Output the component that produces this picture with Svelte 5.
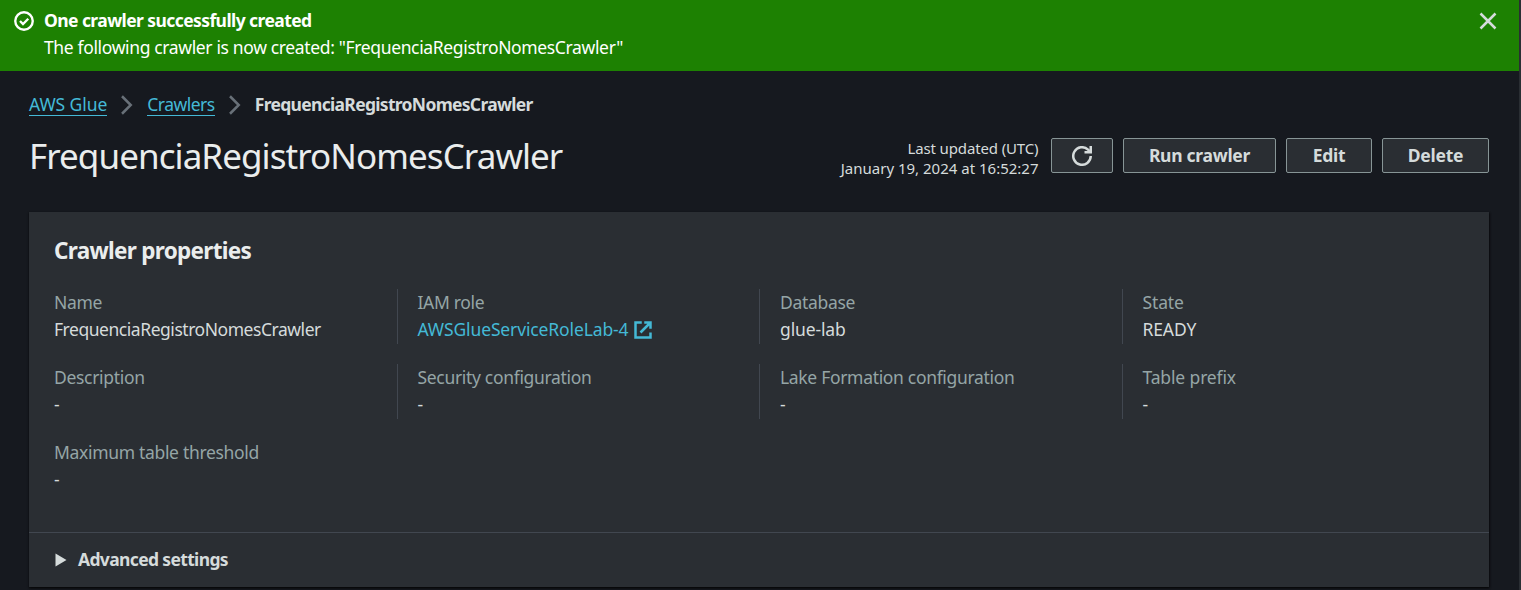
<script>
  const fields = [
    { label: 'Name', value: 'FrequenciaRegistroNomesCrawler' },
    { label: 'IAM role', value: 'AWSGlueServiceRoleLab-4', link: true },
    { label: 'Database', value: 'glue-lab' },
    { label: 'State', value: 'READY' },
    { label: 'Description', value: '-' },
    { label: 'Security configuration', value: '-' },
    { label: 'Lake Formation configuration', value: '-' },
    { label: 'Table prefix', value: '-' },
    { label: 'Maximum table threshold', value: '-' }
  ];
</script>

{#snippet chevron()}
  <svg class="chevron" width="20" height="20" viewBox="0 0 16 16"><path d="M4 1l7 7-7 7" /></svg>
{/snippet}

<div class="page">
  <div class="flash" role="status">
    <svg class="check" width="20" height="20" viewBox="0 0 16 16"><circle cx="8" cy="8" r="7" /><path d="M4.8 8l2.4 2.4 4.2-4.2" /></svg>
    <div class="message">
      <div class="title">One crawler successfully created</div>
      <div class="detail">The following crawler is now created: "FrequenciaRegistroNomesCrawler"</div>
    </div>
    <button class="close" aria-label="Close">
      <svg width="20" height="20" viewBox="0 0 16 16"><path d="M2 2l12 12M14 2L2 14" /></svg>
    </button>
  </div>

  <main>
    <nav>
      <a class="service" href="#glue">AWS Glue</a>
      {@render chevron()}
      <a class="list" href="#crawlers">Crawlers</a>
      {@render chevron()}
      <strong>FrequenciaRegistroNomesCrawler</strong>
    </nav>

    <header>
      <h1>FrequenciaRegistroNomesCrawler</h1>
      <div class="updated"><span class="caption">Last updated (UTC)</span><br /><span>January 19, 2024 at 16:52:27</span></div>
      <div class="actions">
        <button class="refresh" aria-label="Refresh">
          <svg width="20" height="20" viewBox="0 0 16 16"><path d="M15 8a7 7 0 1 1-2.2-5.1L14 4.1" /><path d="M10 5h5V0" /></svg>
        </button>
        <button class="run">Run crawler</button>
        <button class="edit">Edit</button>
        <button class="delete">Delete</button>
      </div>
    </header>

    <section>
      <h2>Crawler properties</h2>
      <dl>
        {#each fields as field}
          <div class="field">
            <dt>{field.label}</dt>
            <dd>
              {#if field.link}
                <a href="#role">{field.value}</a><svg width="20" height="20" viewBox="0 0 16 16"><path d="M7 2H2v12h12V10M9 2h5v5M6 10l8-8" /></svg>
              {:else}
                <span class:long={field.value.length > 20}>{field.value}</span>
              {/if}
            </dd>
          </div>
        {/each}
      </dl>
      <div class="advanced">
        <svg width="12" height="14" viewBox="0 0 12 14"><path d="M.5 .5L11.5 7 .5 13.5z" /></svg>
        <span>Advanced settings</span>
      </div>
    </section>
  </main>
</div>

<style>
  :global(body) { background: #2a2e33; }
  .page {
    box-sizing: border-box;
    width: 1519px;
    height: 590px;
    overflow: hidden;
    background: #16191f;
    color: #d5dbdb;
    font: 17.5px/27px "Noto Sans", "Open Sans", sans-serif;
  }
  svg { fill: none; stroke: currentColor; stroke-width: 2; flex: none; }
  span, strong, h1, dt, a { white-space: nowrap; }
  button { font: inherit; color: inherit; margin: 0; padding: 0; }

  .flash {
    display: flex;
    box-sizing: border-box;
    height: 71px;
    padding: 7px 21px 0 14px;
    background: #1d8102;
    color: #fff;
  }
  .check { margin: 4px 10px 0 0; stroke-width: 1.9; }
  .message { flex: 1; }
  .title { font-weight: 700; letter-spacing: -.58px; }
  .detail { letter-spacing: -.355px; }
  .close { border: 0; background: none; height: 20px; margin-top: 4px; color: #d5dbdb; }
  .close svg { display: block; }

  main { padding: 20px 30px 0 29px; }
  nav { display: flex; align-items: center; height: 27px; }
  nav a { line-height: 21px; border-bottom: 1px solid; color: #44b9d6; text-decoration: none; }
  .service { letter-spacing: -.08px; }
  .list { letter-spacing: -.5px; }
  strong { letter-spacing: -.69px; }
  .chevron { margin: 0 10px; color: #687078; }

  header { display: flex; align-items: flex-start; margin-top: 19px; height: 75px; }
  h1 { flex: 1; margin: 0; font-size: 35px; line-height: 38px; font-weight: 400; letter-spacing: -.93px; color: #eaeded; }
  .updated { margin-top: 1px; font-size: 15px; line-height: 20px; text-align: right; }
  .caption { letter-spacing: -.13px; }
  .actions { display: flex; gap: 10px; margin: 1px 0 0 12.5px; }
  .actions button {
    box-sizing: border-box;
    height: 35px;
    border: 1px solid #879596;
    border-radius: 2px;
    background: #2a2e33;
    font-weight: 700;
    letter-spacing: -.28px;
    line-height: 33px;
    white-space: nowrap;
  }
  .actions .refresh { width: 62px; display: grid; place-items: center; }
  .run { width: 153px; }
  .edit { width: 86px; }
  .delete { width: 107px; }

  section {
    box-sizing: border-box;
    height: 375px;
    background: #2a2e33;
    box-shadow: 0 1px 2px rgba(0, 0, 0, .7), 1px 1px 2px rgba(0, 0, 0, .4);
  }
  h2 { margin: 0; padding: 24px 25px 0; font-size: 22.5px; line-height: 29px; letter-spacing: -.7px; color: #eaeded; }
  dl {
    display: grid;
    grid-template-columns: repeat(4, 1fr);
    row-gap: 20px;
    height: 205px;
    margin: 24px 5px 38px;
  }
  .field { box-sizing: border-box; height: 55px; padding-left: 20px; border-left: 1px solid #414750; }
  .field:nth-child(4n + 1) { border-color: transparent; padding-left: 19px; }
  dt { color: #95a5a6; letter-spacing: -.32px; }
  .field:nth-child(4n) dt { letter-spacing: -.14px; }
  dd { display: flex; align-items: center; height: 27px; margin: 0; letter-spacing: -.13px; }
  .long { letter-spacing: -.46px; }
  dd a { color: #44b9d6; text-decoration: none; }
  dd svg { margin: 1px 0 0 5px; color: #44b9d6; }
  .advanced {
    display: flex;
    align-items: center;
    height: 53px;
    padding: 0 0 1px 26px;
    border-top: 1px solid #414750;
    font-weight: 700;
    letter-spacing: -.65px;
  }
  .advanced svg { fill: currentColor; stroke: none; margin-right: 11px; }
</style>
